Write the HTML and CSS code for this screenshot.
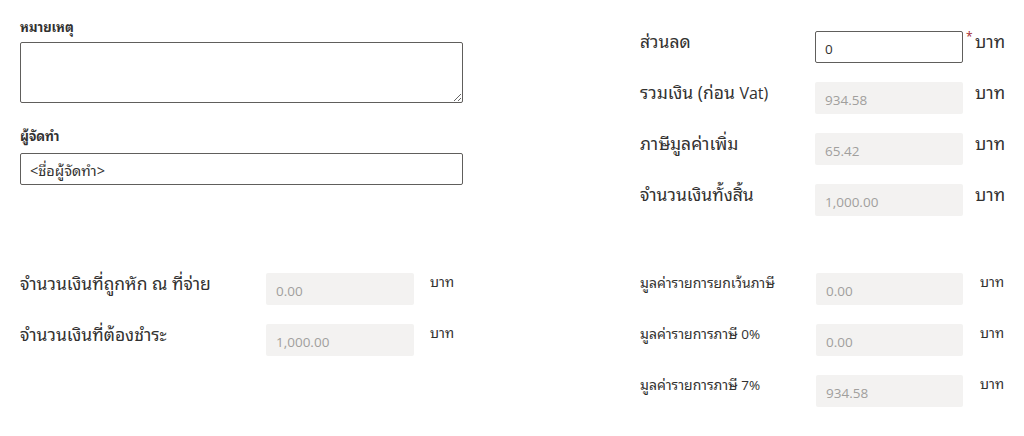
FILE: index.html
```html
<!DOCTYPE html>
<html lang="th">
<head>
<meta charset="utf-8">
<link rel="stylesheet" href="styles.css">
</head>
<body>
<div class="page">
  <section class="top">
    <div class="left">
      <label class="flabel">หมายเหตุ</label>
      <textarea class="area"></textarea>
      <label class="flabel second">ผู้จัดทำ</label>
      <input class="field" type="text" value="&lt;ชื่อผู้จัดทำ&gt;">
    </div>
    <div class="right">
      <div class="row">
        <span class="lbl big">ส่วนลด</span>
        <input class="box active" type="text" value="0">
        <span class="req">*</span>
        <span class="unit big">บาท</span>
      </div>
      <div class="row">
        <span class="lbl big">รวมเงิน (ก่อน <span class="latin">Vat)</span></span>
        <input class="box" type="text" value="934.58" disabled>
        <span class="req"></span>
        <span class="unit big">บาท</span>
      </div>
      <div class="row">
        <span class="lbl big">ภาษีมูลค่าเพิ่ม</span>
        <input class="box" type="text" value="65.42" disabled>
        <span class="req"></span>
        <span class="unit big">บาท</span>
      </div>
      <div class="row">
        <span class="lbl big">จำนวนเงินทั้งสิ้น</span>
        <input class="box" type="text" value="1,000.00" disabled>
        <span class="req"></span>
        <span class="unit big">บาท</span>
      </div>
    </div>
  </section>
  <section class="bottom">
    <div class="left">
      <div class="row wide">
        <span class="lbl big">จำนวนเงินที่ถูกหัก ณ ที่จ่าย</span>
        <input class="box" type="text" value="0.00" disabled>
        <span class="unit small">บาท</span>
      </div>
      <div class="row wide">
        <span class="lbl big">จำนวนเงินที่ต้องชำระ</span>
        <input class="box" type="text" value="1,000.00" disabled>
        <span class="unit small">บาท</span>
      </div>
    </div>
    <div class="right">
      <div class="row sm">
        <span class="lbl small">มูลค่ารายการยกเว้นภาษี</span>
        <input class="box" type="text" value="0.00" disabled>
        <span class="unit small">บาท</span>
      </div>
      <div class="row sm">
        <span class="lbl small">มูลค่ารายการภาษี <span class="latin-s">0%</span></span>
        <input class="box" type="text" value="0.00" disabled>
        <span class="unit small">บาท</span>
      </div>
      <div class="row sm">
        <span class="lbl small">มูลค่ารายการภาษี <span class="latin-s">7%</span></span>
        <input class="box" type="text" value="934.58" disabled>
        <span class="unit small">บาท</span>
      </div>
    </div>
  </section>
</div>
</body>
</html>
```
FILE: styles.css
```css
* { box-sizing: border-box; }
html, body { margin: 0; background: #fff; }
body {
  font-family: "Open Sans", "Noto Sans Thai Looped", sans-serif;
  color: #323130;
}
.page {
  padding: 17px 0 0 20px;
}
.top, .bottom {
  display: grid;
  grid-template-columns: 600px 1fr;
  column-gap: 20px;
}
.bottom { margin-top: 38px; }
.top .right { margin-top: 14px; }

.flabel {
  display: block;
  font-size: 13px;
  font-weight: 700;
  line-height: 20px;
  height: 20px;
  margin-bottom: 5px;
}
.flabel.second { margin-top: 23px; margin-bottom: 7px; }
.area {
  display: block;
  width: 443px;
  height: 61px;
  border: 1px solid #605e5c;
  border-radius: 2px;
  resize: vertical;
  font-family: inherit;
}
.field {
  display: block;
  width: 443px;
  height: 32px;
  border: 1px solid #605e5c;
  border-radius: 2px;
  padding: 0 9px;
  font-family: inherit;
  font-size: 14.5px;
  color: #323130;
}

.row {
  display: flex;
  align-items: flex-start;
  height: 32px;
  margin-bottom: 19px;
}
.row.sm:nth-child(3) { margin-top: 1px; }
.lbl { width: 175px; flex: none; white-space: nowrap; }
.wide .lbl { width: 246px; }
.sm .lbl { width: 176px; }
.big { font-size: 17.5px; line-height: 20px; }
.small { font-size: 14px; line-height: 20px; }
.latin { font-size: 16px; }
.latin-s { font-size: 13.5px; }
.box {
  flex: none;
  width: 148px;
  height: 32px;
  border: none;
  border-radius: 2px;
  background: #f3f2f1;
  padding: 0 10px;
  padding-top: 3px;
  font-family: inherit;
  font-size: 13.5px;
  color: #a19f9d;
}
.sm .box { width: 147px; }
.box.active {
  background: #fff;
  border: 1px solid #605e5c;
  color: #323130;
  padding-left: 9px;
}
.req {
  width: 12px;
  flex: none;
  color: #a4262c;
  font-size: 12px;
  line-height: 12px;
  padding-left: 3px;
}
.unit { flex: none; }
.wide .unit { margin-left: 16px; line-height: 18px; font-size: 14px; }
.sm .unit { margin-left: 17px; line-height: 18px; font-size: 14px; }
```
